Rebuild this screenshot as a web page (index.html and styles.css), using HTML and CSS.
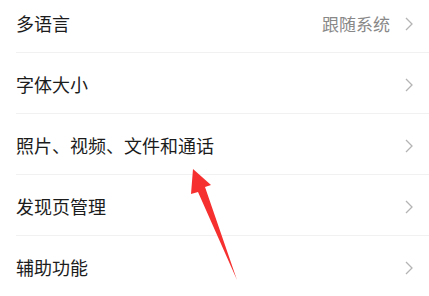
FILE: index.html
```html
<!DOCTYPE html>
<html lang="zh-CN">
<head>
    <meta charset="UTF-8">
    <meta name="viewport" content="width=device-width, initial-scale=1.0">
    <title>设置</title>
    <link rel="stylesheet" href="styles.css">
</head>
<body>
    <ul class="settings-list">
        <li class="item">
            <span class="label">多语言</span>
            <span class="value">跟随系统</span>
            <svg class="chevron" viewBox="0 0 8 14"><path d="M1 1 L7 7 L1 13"/></svg>
        </li>
        <li class="item">
            <span class="label">字体大小</span>
            <svg class="chevron" viewBox="0 0 8 14"><path d="M1 1 L7 7 L1 13"/></svg>
        </li>
        <li class="item">
            <span class="label">照片、视频、文件和通话</span>
            <svg class="chevron" viewBox="0 0 8 14"><path d="M1 1 L7 7 L1 13"/></svg>
        </li>
        <li class="item">
            <span class="label">发现页管理</span>
            <svg class="chevron" viewBox="0 0 8 14"><path d="M1 1 L7 7 L1 13"/></svg>
        </li>
        <li class="item">
            <span class="label">辅助功能</span>
            <svg class="chevron" viewBox="0 0 8 14"><path d="M1 1 L7 7 L1 13"/></svg>
        </li>
    </ul>

    <!-- red annotation arrow pointing at the 3rd row -->
    <svg class="arrow" width="429" height="296" viewBox="0 0 429 296">
        <polygon points="193,169 211,185 205,187 237,280 198,192 191,194" />
    </svg>
</body>
</html>
```

FILE: styles.css
```css
* {
    margin: 0;
    padding: 0;
    box-sizing: border-box;
}

body {
    font-family: "Noto Sans CJK SC", "Noto Sans", sans-serif;
    background-color: #ffffff;
    width: 429px;
    height: 296px;
    overflow: hidden;
    position: relative;
}

.settings-list {
    list-style: none;
    margin-top: -8px;
}

.item {
    display: flex;
    align-items: center;
    height: 61px;
    margin-left: 16px;
    padding-right: 16px;
    border-bottom: 1px solid #f1f1f1;
}

.label {
    flex: 1;
    font-size: 18px;
    color: #1c1c1c;
    padding-top: 2px;
}

.value {
    font-size: 17px;
    color: #888888;
    margin-right: 15px;
    padding-top: 3px;
}

.chevron {
    width: 8px;
    height: 14px;
    margin-top: 3px;
}

.chevron path {
    fill: none;
    stroke: #b4b4b4;
    stroke-width: 1.3;
}

.arrow {
    position: absolute;
    left: 0;
    top: 0;
}

.arrow polygon {
    fill: #f5302f;
}
```
